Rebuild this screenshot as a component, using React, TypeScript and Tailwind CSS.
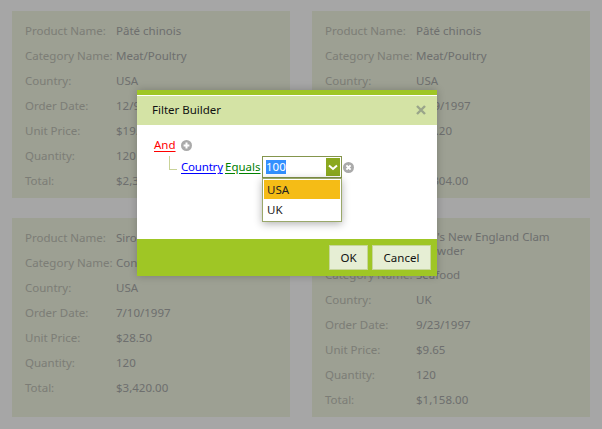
import React from 'react';

type Order = {
  product: string;
  category: string;
  country: string;
  date: string;
  price: string;
  quantity: string;
  total: string;
};

const orders: Order[] = [
  { product: 'Pâté chinois', category: 'Meat/Poultry', country: 'USA', date: '12/9/1997', price: '$19.20', quantity: '120', total: '$2,304.00' },
  { product: 'Pâté chinois', category: 'Meat/Poultry', country: 'USA', date: '12/9/1997', price: '$19.20', quantity: '120', total: '$2,304.00' },
  { product: "Sirop d'érable", category: 'Condiments', country: 'USA', date: '7/10/1997', price: '$28.50', quantity: '120', total: '$3,420.00' },
  { product: "Jack's New England Clam Chowder", category: 'Seafood', country: 'UK', date: '9/23/1997', price: '$9.65', quantity: '120', total: '$1,158.00' },
];

const Row: React.FC<{ label: string; value: string }> = ({ label, value }) => (
  <div className="flex items-center min-h-[25px] py-[4.5px]">
    <div className="w-[91px] shrink-0 whitespace-nowrap text-[#bfc1b6]">{label}</div>
    <div className="w-[150px] text-[#a9abaa]">{value}</div>
  </div>
);

const OrderCard: React.FC<{ order: Order }> = ({ order }) => (
  <div className="bg-[#f1f6e2] pl-[13px] pr-2 pt-[7px] pb-[5px]">
    <Row label="Product Name:" value={order.product} />
    <Row label="Category Name:" value={order.category} />
    <Row label="Country:" value={order.country} />
    <Row label="Order Date:" value={order.date} />
    <Row label="Unit Price:" value={order.price} />
    <Row label="Quantity:" value={order.quantity} />
    <Row label="Total:" value={order.total} />
  </div>
);

const RoundIcon: React.FC<{ kind: 'plus' | 'remove' }> = ({ kind }) => (
  <svg width="11" height="11" viewBox="0 0 11 11" className="shrink-0">
    <circle cx="5.5" cy="5.5" r="5.5" fill="#aaaaaa" />
    {kind === 'plus' ? (
      <path d="M5.5 2.6v5.8M2.6 5.5h5.8" stroke="#fff" strokeWidth="2" />
    ) : (
      <path d="M3.4 3.4l4.2 4.2M7.6 3.4l-4.2 4.2" stroke="#fff" strokeWidth="2" />
    )}
  </svg>
);

const FilterDialog: React.FC = () => (
  <div className="absolute left-[137px] top-[90px] w-[300px] bg-white shadow-[0_0_8px_rgba(0,0,0,0.22)]">
    <div className="h-[5px] bg-[#9fc625] border-b border-white box-content" />
    <div className="h-[29px] bg-[#d4e3a5] flex items-center justify-between pl-[15px] pr-[11px] pb-[2px] text-[#111]">
      <span>Filter Builder</span>
      <svg width="10" height="10" viewBox="0 0 10 10">
        <path d="M1 1l8 8M9 1l-8 8" stroke="#9aa58a" strokeWidth="2.4" />
      </svg>
    </div>
    <div className="h-[114px] pl-[17px] pt-[9px]">
      <div className="flex items-center gap-[5px] h-[22px]">
        <a className="text-[#ff0000] underline underline-offset-2">And</a>
        <RoundIcon kind="plus" />
      </div>
      <div className="flex items-center h-[22px]">
        <div className="w-[8px] h-[14px] ml-[15px] mb-[8px] border-l border-b border-[#c9d398]" />
        <div className="w-[44px] ml-[4px]">
          <a className="text-[#0000ff] underline underline-offset-2 tracking-[-0.2px]">Country</a>
        </div>
        <div className="w-[37px]">
          <a className="text-[#008000] underline underline-offset-2">Equals</a>
        </div>
        <div className="relative w-[80px] h-[22px] border border-[#84954c] flex items-center justify-between pl-[3px] pr-[1px]">
          <span className="bg-[#3390ff] text-white">100</span>
          <div className="w-[14px] h-[18px] bg-[#8aa81f] flex items-center justify-center">
            <svg width="10" height="7" viewBox="0 0 10 7">
              <path d="M1 1.5l4 3.5 4-3.5" fill="none" stroke="#fff" strokeWidth="2" />
            </svg>
          </div>
          <div className="absolute left-[-1px] top-[21px] w-[80px] h-[44px] bg-white border border-[#9aa86a] p-[1px] shadow-[0_2px_8px_rgba(0,0,0,0.3)]">
            <div className="h-[19px] bg-[#f5bc16] pl-[3px] leading-[19px] text-[#222]">USA</div>
            <div className="h-[20px] pl-[3px] leading-[21px] text-[#222]">UK</div>
          </div>
        </div>
        <div className="ml-[1px]">
          <RoundIcon kind="remove" />
        </div>
      </div>
    </div>
    <div className="h-[37px] bg-[#9fc625] flex items-start justify-end gap-[4px] pt-[6px] pr-[6px]">
      <button className="w-[39px] h-[25px] bg-[#e6eed4] border border-[#c6d69a] text-[#111]">OK</button>
      <button className="w-[59px] h-[25px] bg-[#e6eed4] border border-[#c6d69a] text-[#111]">Cancel</button>
    </div>
  </div>
);

export default function App() {
  return (
    <div className="relative w-[602px] h-[429px] overflow-hidden bg-white font-['Noto_Sans',sans-serif] text-[11.5px] leading-[14px]">
      <div className="grid grid-cols-[278px_278px] gap-x-[22px] gap-y-[20px] pl-[12px] pt-[11px]">
        {orders.map((order, idx) => (
          <OrderCard key={idx} order={order} />
        ))}
      </div>
      <div className="absolute inset-0 bg-black/35" />
      <FilterDialog />
    </div>
  );
}
